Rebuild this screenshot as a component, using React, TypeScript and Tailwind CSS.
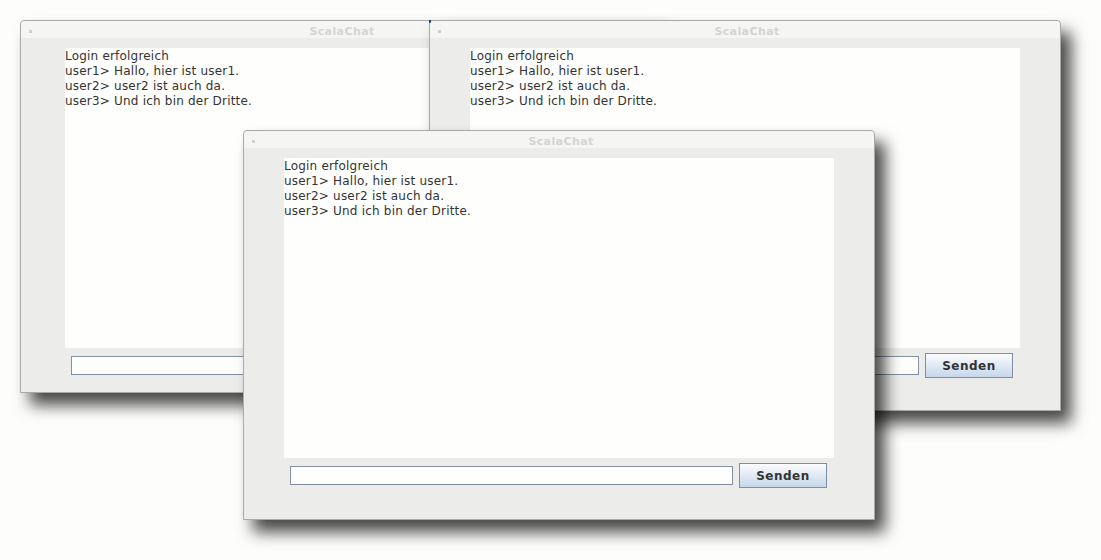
const LINES = [
  'Login erfolgreich',
  'user1> Hallo, hier ist user1.',
  'user2> user2 ist auch da.',
  'user3> Und ich bin der Dritte.',
];

function ChatWindow({ className, corner }: { className: string; corner?: boolean }) {
  return (
    <div className={`absolute flex flex-col rounded-t-[4px] border border-[#a9aaa8] bg-[#ecedea] shadow-[10px_12px_16px_rgba(0,0,0,0.72)] ${className}`}>
      {corner && <div className="absolute -left-px -top-px h-[3px] w-[2px] bg-[#1d3f82]" />}
      <div className="relative flex h-[17px] shrink-0 justify-center rounded-t-[4px] bg-[#f5f6f4] pl-[4px] pt-[5px]">
        <div className="absolute left-[8px] top-[9px] h-[3px] w-[3px] bg-[#cfd0ce]" />
        <span className="text-[11px] font-bold leading-[11px] tracking-[0.4px] text-[#d3d5d1] [font-family:'DejaVu_Sans',sans-serif]">ScalaChat</span>
      </div>
      <div className="mx-auto mt-[10px] h-[300px] w-[550px] bg-[#fefefc] pt-px text-[12px] leading-[15px] tracking-[0.2px] text-[#333333] [font-family:'DejaVu_Sans',sans-serif]">
        {LINES.map(l => <div key={l} className="whitespace-pre">{l}</div>)}
      </div>
      <div className="mt-[5px] flex items-center justify-center gap-[6px] pr-px">
        <div className="h-[19px] w-[443px] border border-[#8391a6] border-b-[#7f8da2] bg-[#fefefc] shadow-[inset_-1px_-1px_0_#ffffff]" />
        <button className="h-[25px] w-[88px] border border-[#7f8ea4] bg-gradient-to-b from-[#fbfcfd] to-[#c6d6ea] text-[12px] font-bold tracking-[0.5px] text-[#333333] [font-family:'DejaVu_Sans',sans-serif]">
          Senden
        </button>
      </div>
    </div>
  );
}

export default function App() {
  return (
    <div className="relative h-[560px] w-[1101px] overflow-hidden bg-[#fdfdfb]">
      <ChatWindow className="left-[20px] top-[20px] h-[373px] w-[640px]" />
      <ChatWindow className="left-[429px] top-[20px] h-[391px] w-[632px]" corner />
      <ChatWindow className="left-[243px] top-[130px] h-[390px] w-[632px]" />
    </div>
  );
}
